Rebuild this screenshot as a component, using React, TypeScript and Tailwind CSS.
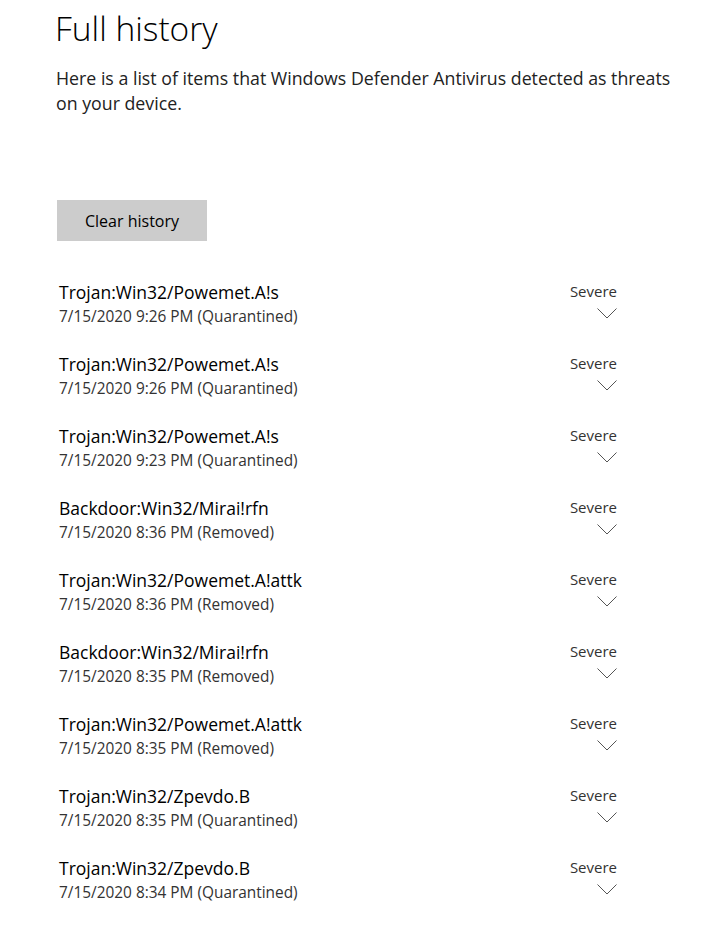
const threats = [
  { name: "Trojan:Win32/Powemet.A!s", time: "7/15/2020 9:26 PM", status: "Quarantined" },
  { name: "Trojan:Win32/Powemet.A!s", time: "7/15/2020 9:26 PM", status: "Quarantined" },
  { name: "Trojan:Win32/Powemet.A!s", time: "7/15/2020 9:23 PM", status: "Quarantined" },
  { name: "Backdoor:Win32/Mirai!rfn", time: "7/15/2020 8:36 PM", status: "Removed" },
  { name: "Trojan:Win32/Powemet.A!attk", time: "7/15/2020 8:36 PM", status: "Removed" },
  { name: "Backdoor:Win32/Mirai!rfn", time: "7/15/2020 8:35 PM", status: "Removed" },
  { name: "Trojan:Win32/Powemet.A!attk", time: "7/15/2020 8:35 PM", status: "Removed" },
  { name: "Trojan:Win32/Zpevdo.B", time: "7/15/2020 8:35 PM", status: "Quarantined" },
  { name: "Trojan:Win32/Zpevdo.B", time: "7/15/2020 8:34 PM", status: "Quarantined" },
];

function Chevron() {
  return (
    <svg width="20" height="11" viewBox="0 0 20 11" fill="none" stroke="#555" strokeWidth="1">
      <path d="M0.5 0.5L10 10L19.5 0.5" />
    </svg>
  );
}

export default function App() {
  return (
    <div className="min-h-screen bg-white pl-[56px] pt-[6px] text-[#111] font-['Open_Sans',sans-serif]">
      <h1 className="-ml-px text-[33.5px] leading-[44px] font-light text-black">Full history</h1>
      <p className="mt-[16px] w-[622px] text-[17.75px] leading-[25px] text-[#222]">
        Here is a list of items that Windows Defender Antivirus detected as threats on your device.
      </p>

      <button className="mt-[84px] ml-px flex h-[41px] w-[150px] items-center justify-center bg-[#cccccc] text-[16px] text-black">
        Clear history
      </button>

      <ul className="mt-[40px] ml-[3px] w-[558px]">
        {threats.map((t, i) => (
          <li key={i} className="flex h-[72px] justify-between">
            <div>
              <div className="-mt-px text-[17.5px] leading-[24px] text-black">{t.name}</div>
              <div className="mt-[2px] text-[15.4px] leading-[22px] text-[#333]">
                {t.time} ({t.status})
              </div>
            </div>
            <div className="flex flex-col items-end">
              <div className="-mt-px text-[15px] leading-[22px] text-[#333]">Severe</div>
              <div className="mt-[6px]">
                <Chevron />
              </div>
            </div>
          </li>
        ))}
      </ul>
    </div>
  );
}
